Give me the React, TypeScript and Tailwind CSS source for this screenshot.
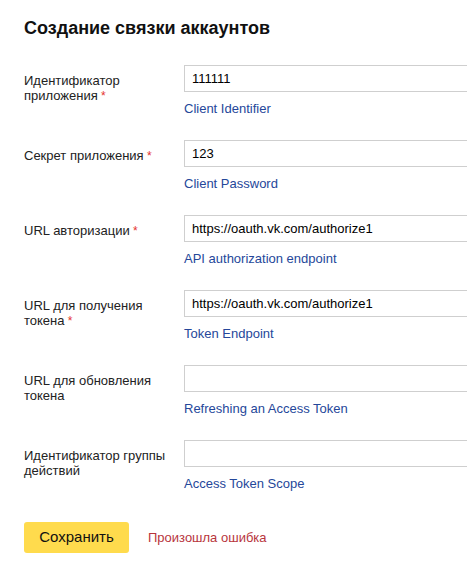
import React from 'react';

// One row of the form: label on the left, input and a hint link under it
interface Field {
  label: string;
  required: boolean;
  value: string;
  hint: string;
}

const fields: Field[] = [
  { label: 'Идентификатор приложения', required: true, value: '111111', hint: 'Client Identifier' },
  { label: 'Секрет приложения', required: true, value: '123', hint: 'Client Password' },
  { label: 'URL авторизации', required: true, value: 'https://oauth.vk.com/authorize1', hint: 'API authorization endpoint' },
  { label: 'URL для получения токена', required: true, value: 'https://oauth.vk.com/authorize1', hint: 'Token Endpoint' },
  { label: 'URL для обновления токена', required: false, value: '', hint: 'Refreshing an Access Token' },
  { label: 'Идентификатор группы действий', required: false, value: '', hint: 'Access Token Scope' },
];

const App: React.FC = () => {
  return (
    <div
      className="w-[467px] h-[574px] overflow-hidden bg-white text-black pl-6"
      style={{ fontFamily: '"Liberation Sans", Arial, sans-serif' }}
    >
      <h1 className="pt-[17px] text-[18px] leading-[22px] font-bold text-[#111]">Создание связки аккаунтов</h1>

      <div className="mt-[26px] flex flex-col gap-[23px]">
        {fields.map((field, index) => (
          <div key={index} className="grid grid-cols-[160px_300px]">
            <div className="pt-[8px] pr-[10px] text-[13px] leading-[15px] text-[#222]">
              {field.label}
              {field.required && <span className="text-[12px] leading-none text-[#e5322d]"> *</span>}
            </div>
            <div className="flex flex-col">
              <input
                type="text"
                readOnly
                value={field.value}
                className="h-[27px] w-[300px] border border-[#cfcfcf] bg-white pl-[7px] text-[13px] text-black outline-none"
                style={{ fontFamily: '"Liberation Sans", Arial, sans-serif' }}
              />
              <a href="#" className="mt-[9px] text-[13px] leading-4 text-[#25479a]">
                {field.hint}
              </a>
            </div>
          </div>
        ))}
      </div>

      <div className="mt-[30px] flex items-center gap-[19px]">
        <button className="h-[31px] w-[105px] rounded-[3px] bg-[#ffdb4d] text-[15px] text-[#111]">Сохранить</button>
        <span className="text-[13px] text-[#b8353c]">Произошла ошибка</span>
      </div>
    </div>
  );
};

export default App;
